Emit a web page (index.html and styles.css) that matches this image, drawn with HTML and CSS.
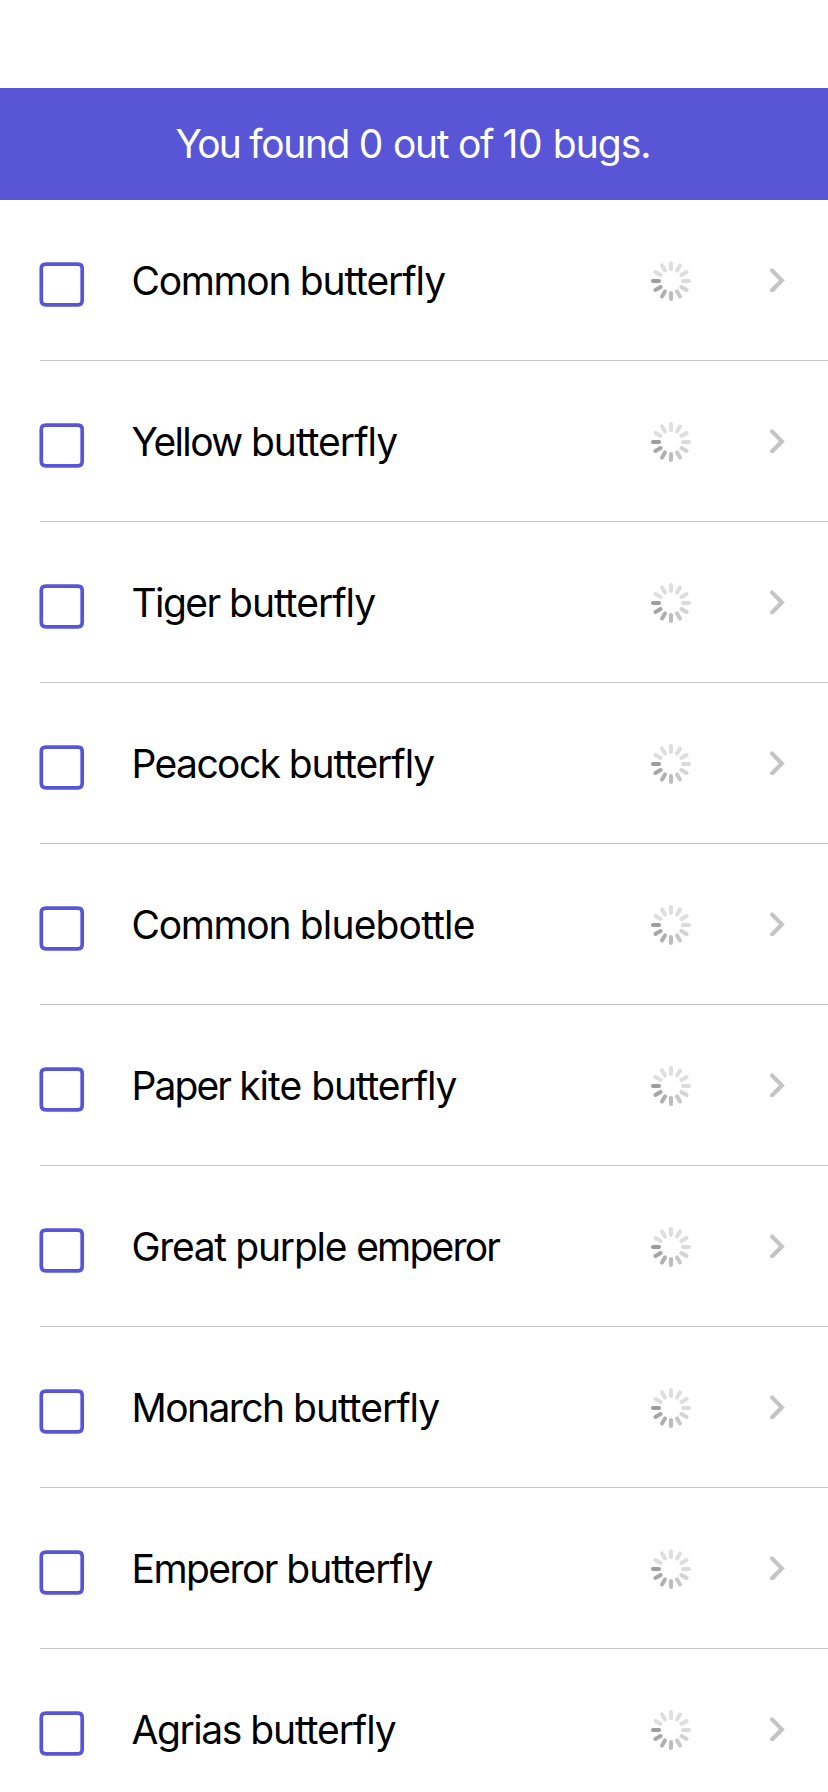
FILE: index.html
```html
<!DOCTYPE html>
<html lang="en">
<head>
<meta charset="utf-8">
<title>Bugs</title>
<link rel="stylesheet" href="styles.css">
</head>
<body>
<svg class="symbols" aria-hidden="true">
  <symbol id="box" viewBox="0 0 46 46"><path d="M7 2.1H39Q43.2 2.1 43.2 6.3V38.3Q43.2 42.8 39 42.8H7Q2.3 42.8 2.3 38.3V6.3Q2.3 2.1 7 2.1Z"/></symbol>
  <symbol id="spinner" viewBox="-21 -21 42 42">
    <path stroke="#dededf" d="M0-12V-18"/>
    <path stroke="#dededf" transform="rotate(30)" d="M0-12V-18"/>
    <path stroke="#dededf" transform="rotate(60)" d="M0-12V-18"/>
    <path stroke="#dbdbdc" transform="rotate(90)" d="M0-12V-18"/>
    <path stroke="#d3d3d5" transform="rotate(120)" d="M0-12V-18"/>
    <path stroke="#c8c8ca" transform="rotate(150)" d="M0-12V-18"/>
    <path stroke="#bcbcbe" transform="rotate(180)" d="M0-12V-18"/>
    <path stroke="#b0b0b2" transform="rotate(210)" d="M0-12V-18"/>
    <path stroke="#a6a6a8" transform="rotate(240)" d="M0-12V-18"/>
    <path stroke="#9d9d9f" transform="rotate(270)" d="M0-12V-18"/>
    <path stroke="#dededf" transform="rotate(300)" d="M0-12V-18"/>
    <path stroke="#dededf" transform="rotate(330)" d="M0-12V-18"/>
  </symbol>
  <symbol id="chevron" viewBox="0 0 16 24"><path d="M3.2 2.6L12.8 12.4L3.2 22.2"/></symbol>
</svg>
<header class="banner" id="banner"></header>
<ul class="list" id="list"></ul>
<script src="list.js"></script>
</body>
</html>
```
FILE: styles.css
```css
body {
  margin: 0;
  padding-top: 88px;
  height: 1704px;
  overflow: hidden;
  background: #fff;
  color: #000;
  font-family: Inter, sans-serif;
  font-size: 39px;
}

.symbols {
  display: none;
}

.banner {
  box-sizing: border-box;
  display: flex;
  align-items: center;
  justify-content: center;
  height: 112px;
  padding: 0 2px 1px 0;
  background: #5856d6;
  color: #fff;
}

.list {
  margin: 0;
  padding: 0 0 0 40px;
  list-style: none;
}

.row {
  box-sizing: border-box;
  display: flex;
  align-items: center;
  height: 161px;
  border-bottom: 1px solid #c6c6c8;
}

.box {
  width: 46px;
  height: 46px;
  margin: 9px 46.5px 0 -1px;
  fill: none;
  stroke: #5856d6;
  stroke-width: 3.7;
}

.name {
  flex: 1;
  padding-top: 1px;
  white-space: nowrap;
}

.spinner {
  width: 42px;
  height: 42px;
  margin: 2px 77px 0 0;
  stroke-width: 4;
  stroke-linecap: round;
}

.chevron {
  width: 16px;
  height: 24px;
  margin-right: 43px;
  fill: none;
  stroke: #c4c4c6;
  stroke-width: 4.2;
  stroke-linecap: round;
  stroke-linejoin: miter;
}
```
FILE: list.js
```js
// Each label is a list of [word, letter spacing in px].
const banner = [["You", -1.77], ["found", -1.37], ["0", -0.65], ["out", -1.3], ["of", -1.4], ["10", -0.4], ["bugs.", -1.0]];
const bugs = [
  [["Common", -1.34], ["butterfly", -1.1]],
  [["Yellow", -1.6], ["butterfly", -1.0]],
  [["Tiger", -1.57], ["butterfly", -1.0]],
  [["Peacock", -1.6], ["butterfly", -1.1]],
  [["Common", -1.34], ["bluebottle", -0.82]],
  [["Paper", -1.9], ["kite", -1.0], ["butterfly", -1.1]],
  [["Great", -1.35], ["purple", -1.2], ["emperor", -1.8]],
  [["Monarch", -1.55], ["butterfly", -1.0]],
  [["Emperor", -1.56], ["butterfly", -1.0]],
  [["Agrias", -1.46], ["butterfly", -1.1]],
];
const label = (words) => "<span>" + words.map(([word, spacing], i) =>
  `<span style="letter-spacing:${spacing}px">${word}${i < words.length - 1 ? " " : ""}</span>`).join("") + "</span>";

document.getElementById("banner").innerHTML = label(banner);
document.getElementById("list").innerHTML = bugs.map((name) => `
  <li class="row">
    <svg class="box"><use href="#box"/></svg>
    <span class="name">${label(name)}</span>
    <svg class="spinner"><use href="#spinner"/></svg>
    <svg class="chevron"><use href="#chevron"/></svg>
  </li>`).join("");
```
